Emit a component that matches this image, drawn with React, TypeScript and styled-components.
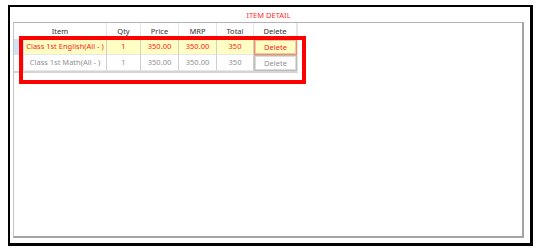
import React from "react";
import styled, { createGlobalStyle } from "styled-components";

const Global = createGlobalStyle`
  html, body { margin: 0; padding: 0; background: #ffffff; }
  body { font-family: "Noto Sans", "Open Sans", sans-serif; }
`;

const Frame = styled.div`
  position: relative;
  box-sizing: border-box;
  margin: 5px 0 0 8px;
  width: 525px;
  height: 241px;
  border: 2px solid #000;
  border-right-width: 3px;
  border-bottom-width: 3px;
  padding: 0 6px 5px 3px;
  display: flex;
  flex-direction: column;
  background: #fff;
`;

const Title = styled.div`
  height: 15px;
  line-height: 15px;
  text-align: center;
  color: #ff2a2a;
  font-size: 7.5px;
  padding-top: 1px;
  box-sizing: border-box;
`;

const GroupBox = styled.div`
  flex: 1;
  box-sizing: border-box;
  border-top: 1px solid #b4b4b4;
  border-left: 1px solid #c4c4c4;
  border-right: 2px solid #a4a4a4;
  border-bottom: 2px solid #a4a4a4;
  background: #fff;
`;

const Grid = styled.div`
  display: grid;
  grid-template-columns: 10px 83px 34px 38px 38px 37px 43px;
  width: max-content;
  border-bottom: 2px solid #d4d4d4;
  border-right: 1px solid #e4e4e4;
`;

const HeadCell = styled.div<{ $span?: number }>`
  grid-column: span ${(p) => p.$span ?? 1};
  height: 16px;
  line-height: 16px;
  text-align: center;
  font-size: 7.5px;
  color: #333;
  border-right: 1px solid #e6e6e6;
  background: #fff;
`;

const RowHead = styled.div<{ $selected?: boolean }>`
  height: 16px;
  box-sizing: border-box;
  background: ${(p) => (p.$selected ? "#cde4f7" : "#fff")};
  border-right: 1px solid #e0e0e0;
`;

const Cell = styled.div<{ $active?: boolean }>`
  height: 16px;
  box-sizing: border-box;
  line-height: 15px;
  text-align: center;
  font-size: 7.5px;
  white-space: nowrap;
  color: ${(p) => (p.$active ? "#ff2020" : "#909090")};
  background: ${(p) => (p.$active ? "#ffffc4" : "#fff")};
  border-right: 1px solid #cfcfcf;
  border-bottom: 1px solid ${(p) => (p.$active ? "#e8e8e8" : "#e8e8e8")};
`;

const ButtonCell = styled.div`
  height: 16px;
  box-sizing: border-box;
  background: #fff;
  display: flex;
`;

const DeleteButton = styled.button<{ $active?: boolean }>`
  flex: 1;
  margin: 0;
  padding: 0;
  font-family: inherit;
  font-size: 7.5px;
  line-height: 12px;
  color: ${(p) => (p.$active ? "#ff2020" : "#909090")};
  background: ${(p) => (p.$active ? "#ffffc4" : "#fff")};
  border: 1px solid ${(p) => (p.$active ? "#f09060" : "#bcbcbc")};
  box-shadow: inset 0 0 0 1px ${(p) => (p.$active ? "#f8c8a0" : "#dcdcdc")};
  cursor: pointer;
`;

const Highlight = styled.div`
  position: absolute;
  left: 9px;
  top: 29px;
  width: 287px;
  height: 48px;
  box-sizing: border-box;
  border: 4px solid #ff0000;
  pointer-events: none;
`;

type Row = { item: string; qty: string; price: string; mrp: string; total: string };

const rows: Row[] = [
  { item: "Class 1st English(All - )", qty: "1", price: "350.00", mrp: "350.00", total: "350" },
  { item: "Class 1st Math(All - )", qty: "1", price: "350.00", mrp: "350.00", total: "350" },
];

export default function App() {
  return (
    <>
      <Global />
      <Frame>
        <Title>ITEM DETAIL</Title>
        <GroupBox>
          <Grid>
            <HeadCell $span={2}>Item</HeadCell>
            <HeadCell>Qty</HeadCell>
            <HeadCell>Price</HeadCell>
            <HeadCell>MRP</HeadCell>
            <HeadCell>Total</HeadCell>
            <HeadCell>Delete</HeadCell>
            {rows.map((r, i) => {
              const active = i === 0;
              return (
                <React.Fragment key={i}>
                  <RowHead $selected={active} />
                  <Cell $active={active}>{r.item}</Cell>
                  <Cell $active={active}>{r.qty}</Cell>
                  <Cell $active={active}>{r.price}</Cell>
                  <Cell $active={active}>{r.mrp}</Cell>
                  <Cell $active={active}>{r.total}</Cell>
                  <ButtonCell>
                    <DeleteButton $active={active}>Delete</DeleteButton>
                  </ButtonCell>
                </React.Fragment>
              );
            })}
          </Grid>
        </GroupBox>
        <Highlight />
      </Frame>
    </>
  );
}
